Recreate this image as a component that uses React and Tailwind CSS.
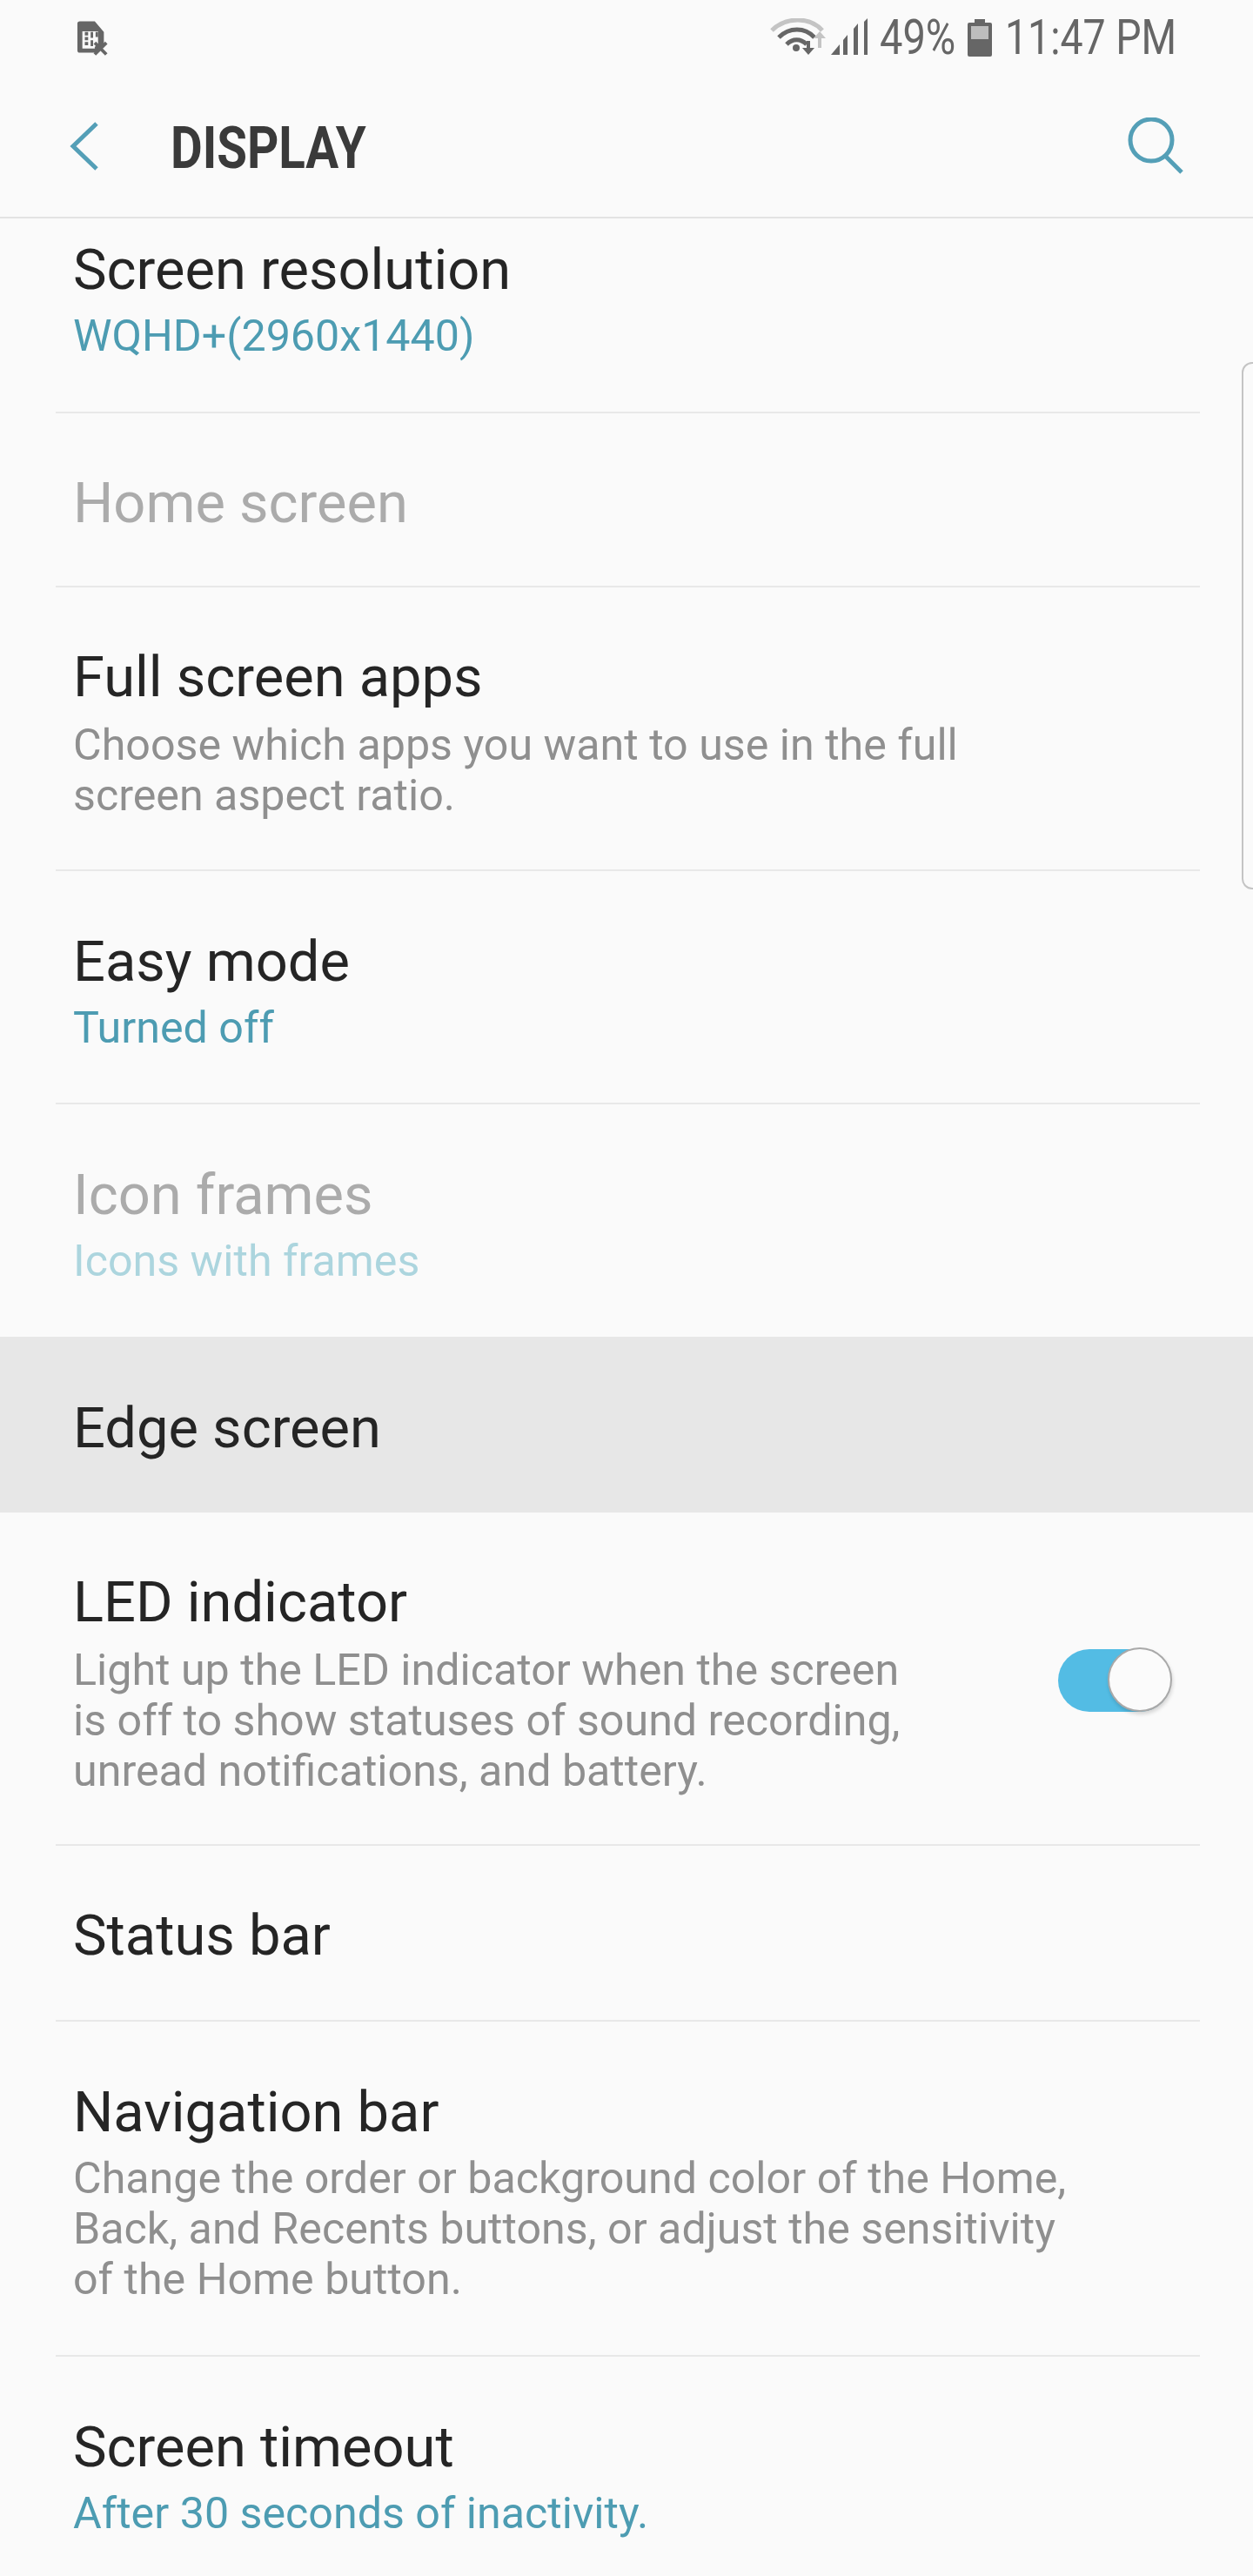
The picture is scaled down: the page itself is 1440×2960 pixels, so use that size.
const ff = { fontFamily: 'Roboto, sans-serif' };

function Row({ h, title, sub, subColor = 'text-[#8f8f8f]', titleColor = 'text-[#252525]', bg = 'bg-[#fafafa]', pt, subMt = 'mt-[1px]', children }) {
  return (
    <div className={`relative flex flex-col shrink-0 ${bg} ${h} ${pt} pl-[84px]`}>
      <div className={`text-[65px] leading-[92px] ${titleColor}`}>{title}</div>
      {sub && (
        <div className={`text-[50.2px] leading-[58px] ${subMt} ${subColor}`}>
          {sub.map((s, i) => <div key={i}>{s}</div>)}
        </div>
      )}
      {children}
    </div>
  );
}

function Sep() {
  return <div className="h-[2px] ml-[64px] w-[1315px] bg-[#e8e8e8] shrink-0" />;
}

export default function App() {
  return (
    <div className="relative w-[1440px] h-[2960px] overflow-hidden bg-[#fafafa]" style={ff}>
      <div className="h-[251px] flex flex-col shrink-0 relative">
        <div className="h-[88px] flex items-start pl-[88px] pr-[93px] justify-between text-[#666]">
          <svg className="mt-[23px]" width="38" height="41" viewBox="0 0 40 42">
            <path d="M4 1h18l11 13v14l-9 10v1H4a3 3 0 0 1-3-3V4a3 3 0 0 1 3-3z" fill="#666" />
            <path d="M7 13h19v15l-4 4v2H7z" fill="#fafafa" />
            <path d="M10 14h4v4h-4zM10 20h4v4h-4zM10 26h4v4h-4zM17 14h3v7h-3zM17 24h3v7h-3zM23 14h3v6h-3z" fill="#666" />
            <path d="M22 27l14 14M36 27L22 41" stroke="#666" strokeWidth="4" />
          </svg>
          <div className="flex items-start h-[88px]">
            <svg className="mt-[21px]" width="114" height="44" viewBox="0 0 114 44">
              <path d="M2 14C18 -2 46 -2 60 14" fill="none" stroke="#c4c4c4" strokeWidth="5" />
              <path d="M10 22C22 10 40 10 51 22" fill="none" stroke="#666" strokeWidth="5" />
              <path d="M19 30C26 23 35 23 42 30" fill="none" stroke="#666" strokeWidth="5" />
              <circle cx="30" cy="34" r="4" fill="#666" />
              <path d="M44 26v14" stroke="#666" strokeWidth="4" />
              <path d="M37 34l7 8 7-8z" fill="#666" />
              <path d="M57 34V20" stroke="#c4c4c4" strokeWidth="4" />
              <path d="M50 23l7-8 7 8z" fill="#c4c4c4" />
              <path d="M70 42l10-12v12z" fill="#666" />
              <path d="M84 42V25l5-6v23zM96 42V12l5-6v36zM108 42V4l4-4v42z" fill="#666" />
            </svg>
            <span className="ml-[12px] mt-[11px] text-[56px] leading-[64px] text-[#666] inline-block w-[90px] whitespace-nowrap origin-left scale-x-[0.84]">49%</span>
            <svg className="ml-[11px] mt-[22px]" width="28" height="43" viewBox="0 0 28 43">
              <path d="M8 0h12v4h6a2 2 0 0 1 2 2v35a2 2 0 0 1-2 2H2a2 2 0 0 1-2-2V6a2 2 0 0 1 2-2h6z" fill="#666" />
              <rect x="4" y="8" width="20" height="15" fill="#bdbdbd" />
            </svg>
            <span className="ml-[15px] mt-[11px] text-[56px] leading-[64px] text-[#666] inline-block w-[192px] whitespace-nowrap origin-left scale-x-[0.83]">11:47 PM</span>
          </div>
        </div>
        <div className="flex items-start pl-[80px] pr-[79px] justify-between">
          <svg className="mt-[52px]" width="34" height="56" viewBox="0 0 34 56">
            <path d="M31 2L4 28l27 26" fill="none" stroke="#549fb7" strokeWidth="5" />
          </svg>
          <svg className="mt-[47px] ml-[2px]" width="66" height="66" viewBox="0 0 66 66">
            <ellipse cx="28" cy="26" rx="24" ry="24" fill="none" stroke="#549fb7" strokeWidth="5" />
            <path d="M44 44l19 19" stroke="#549fb7" strokeWidth="5" />
          </svg>
        </div>
        <div className="absolute left-[196px] top-[132px] text-[#3a3a3a] font-bold text-[66px] leading-[78px] origin-left scale-x-[0.855] whitespace-nowrap">DISPLAY</div>
        <div className="absolute left-0 right-0 bottom-0 h-[2px] bg-[#e3e3e3]" />
      </div>

      <Row h="h-[222px]" pt="pt-[13px]" title="Screen resolution" sub={['WQHD+(2960x1440)']} subColor="text-[#4d9cb2]" />
      <Sep />
      <Row h="h-[198px]" pt="pt-[57px]" title="Home screen" titleColor="text-[#ababab]" />
      <Sep />
      <Row h="h-[324px]" pt="pt-[57px]" subMt="mt-[3px]" title="Full screen apps" sub={['Choose which apps you want to use in the full', 'screen aspect ratio.']} />
      <Sep />
      <Row h="h-[266px]" pt="pt-[58px]" title="Easy mode" sub={['Turned off']} subColor="text-[#4d9cb2]" />
      <Sep />
      <Row h="h-[267px]" pt="pt-[58px]" title="Icon frames" titleColor="text-[#ababab]" sub={['Icons with frames']} subColor="text-[#acd5de]" />
      <Row h="h-[202px]" pt="pt-[59px]" bg="bg-[#e7e7e7]" title="Edge screen" />
      <Row h="h-[381px]" pt="pt-[57px]" subMt="mt-[3px]" title="LED indicator" sub={['Light up the LED indicator when the screen', 'is off to show statuses of sound recording,', 'unread notifications, and battery.']}>
        <div className="absolute left-[1216px] top-[157px] w-[130px] h-[72px] rounded-full bg-[#53bce4]" />
        <div className="absolute left-[1273px] top-[155px] w-[74px] h-[74px] rounded-full bg-[#fbfbfb] border-2 border-[#a9a9a9] shadow-[1px_3px_4px_rgba(0,0,0,0.15)]" />
      </Row>
      <Sep />
      <Row h="h-[200px]" pt="pt-[57px]" title="Status bar" />
      <Sep />
      <Row h="h-[383px]" pt="pt-[58px]" title="Navigation bar" sub={['Change the order or background color of the Home,', 'Back, and Recents buttons, or adjust the sensitivity', 'of the Home button.']} />
      <Sep />
      <Row h="h-[252px]" pt="pt-[58px]" title="Screen timeout" sub={['After 30 seconds of inactivity.']} subColor="text-[#4d9cb2]" />

      <div className="absolute left-[1427px] top-[416px] w-[20px] h-[606px] rounded-l-[12px] border-2 border-[#c4c4c4]" />
    </div>
  );
}
